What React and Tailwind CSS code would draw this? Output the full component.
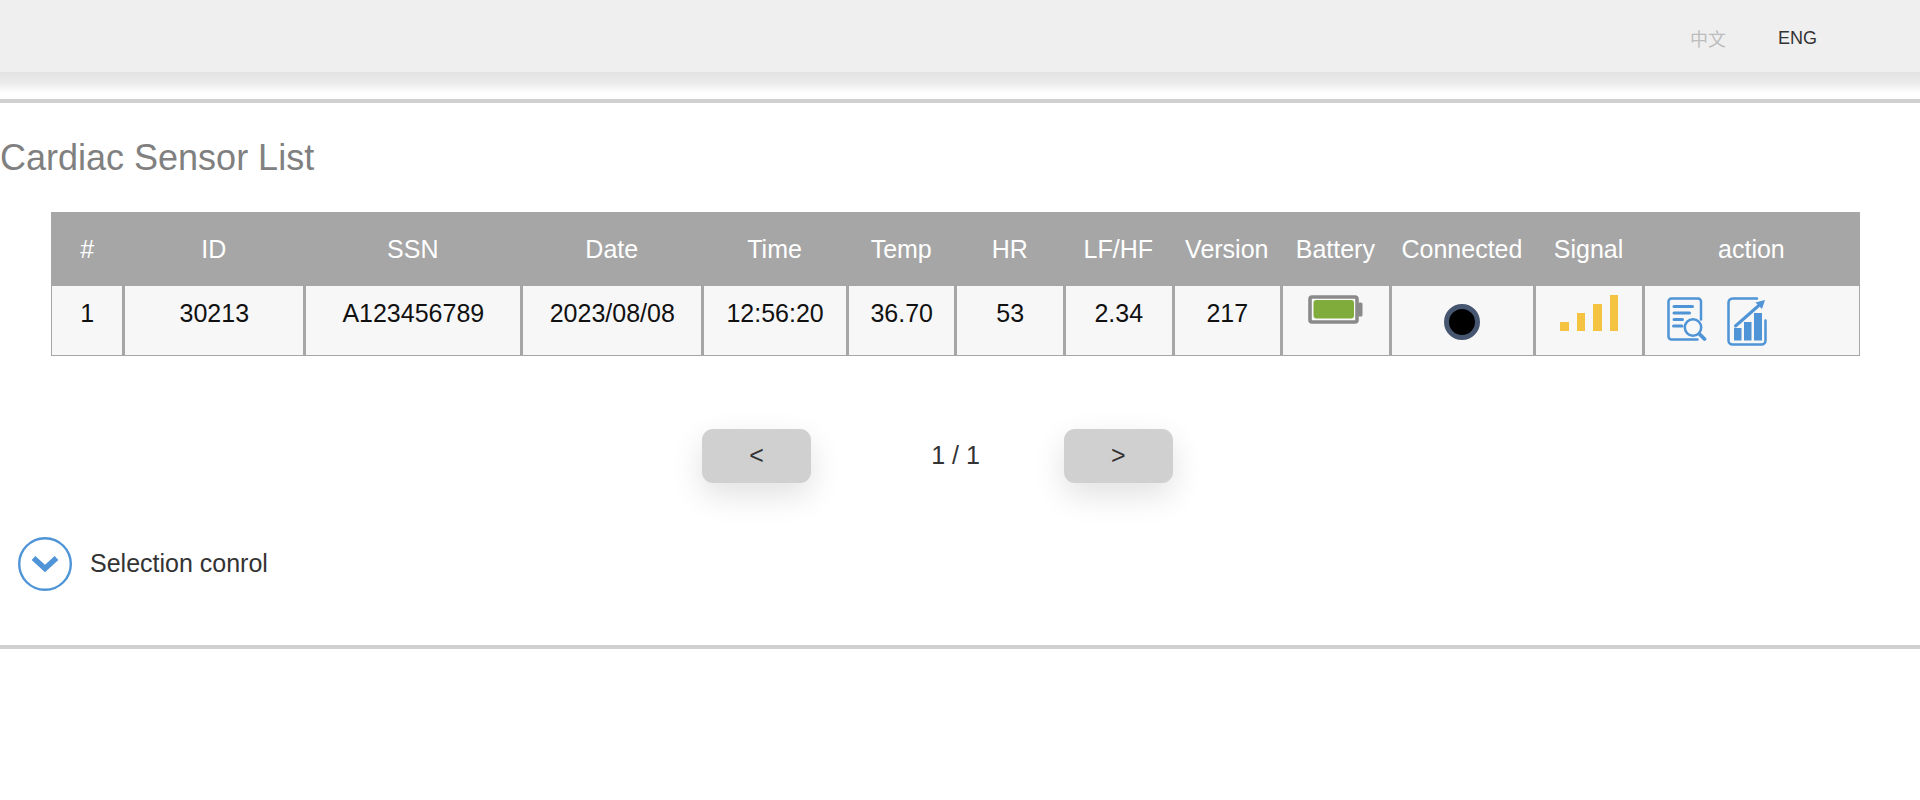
import React from 'react';

const columns = [
  { label: '#', width: 'w-[4%]' },
  { label: 'ID', width: 'w-[10%]' },
  { label: 'SSN', width: 'w-[12%]' },
  { label: 'Date', width: 'w-[10%]' },
  { label: 'Time', width: 'w-[8%]' },
  { label: 'Temp', width: 'w-[6%]' },
  { label: 'HR', width: 'w-[6%]' },
  { label: 'LF/HF', width: 'w-[6%]' },
  { label: 'Version', width: 'w-[6%]' },
  { label: 'Battery', width: 'w-[6%]' },
  { label: 'Connected', width: 'w-[8%]' },
  { label: 'Signal', width: 'w-[6%]' },
  { label: 'action', width: 'w-[12%]' },
];

const sensors = [
  {
    id: '30213',
    ssn: 'A123456789',
    date: '2023/08/08',
    time: '12:56:20',
    temp: '36.70',
    hr: '53',
    lfhf: '2.34',
    version: '217',
  },
];

function BatteryIcon() {
  return (
    <svg className="mx-auto block" width="55" height="29" viewBox="0 0 55 29" role="img" aria-label="Battery full">
      <rect x="50" y="7.5" width="4.5" height="14" rx="1.5" fill="#8a8a8a" />
      <rect x="2" y="2" width="47" height="25" rx="2" fill="#fafafa" stroke="#8a8a8a" strokeWidth="3.6" />
      <rect x="5.5" y="5" width="40.5" height="18.5" rx="3" fill="#80ac3c" />
    </svg>
  );
}

function SignalIcon() {
  return (
    <svg className="mx-auto block" width="58" height="36" viewBox="0 0 58 36" fill="#f5c342" role="img" aria-label="Signal strong">
      <rect x="0" y="27" width="9" height="9" />
      <rect x="17" y="18" width="8" height="18" />
      <rect x="33" y="9" width="9" height="27" />
      <rect x="50" y="0" width="8" height="36" />
    </svg>
  );
}

function ReportIcon() {
  return (
    <svg width="40" height="50" viewBox="0 0 40 50" fill="none" stroke="#4f94d6" strokeWidth="2.5" strokeLinecap="round">
      <path d="M30.5 42.5H4.500a3 3 0 0 1-3-3V4.500a3 3 0 0 1 3-3h26.500a3 3 0 0 1 3 3v18" />
      <path d="M7 9.500h18.500M7 16h15.500M7 22.500h8.500M6.500 29h8.500" strokeWidth="3" />
      <circle cx="26" cy="30.500" r="8.200" />
      <path d="M32.500 37l5 5" strokeWidth="3.800" />
    </svg>
  );
}

function ChartIcon() {
  return (
    <svg width="40" height="50" viewBox="0 0 40 50" fill="none" stroke="#4f94d6" strokeWidth="2.5" strokeLinecap="round">
      <path d="M30 1.500H5.500a4 4 0 0 0-4 4V43.500a4 4 0 0 0 4 4h29a4 4 0 0 0 4-4V23.500" />
      <g fill="#4f94d6" stroke="none">
        <rect x="7" y="31" width="7.500" height="12.500" />
        <rect x="17" y="25" width="7.500" height="18.500" />
        <rect x="27" y="16" width="8" height="27.500" />
        <path d="M38 3L28.500 5.500l6.500 6.500z" />
      </g>
      <path d="M8.500 29L33.500 7" strokeWidth="3" />
    </svg>
  );
}

function SensorTable() {
  return (
    <table className="w-full table-fixed border-separate border-spacing-0 text-center text-[25px] leading-9">
      <thead>
        <tr className="h-[74px] bg-[#a6a6a6] text-white">
          {columns.map((col) => (
            <th key={col.label} scope="col" className={`p-0 font-normal ${col.width}`}>
              {col.label}
            </th>
          ))}
        </tr>
      </thead>
      <tbody className="text-[#111111] [&_td]:border-b [&_td]:border-l-2 [&_td]:border-r [&_td]:border-[#a6a6a6] [&_td]:px-0 [&_td]:py-[9px] [&_td]:align-top [&_td:first-child]:border-l">
        {sensors.map((sensor, index) => (
          <tr key={sensor.id} className="h-[70px] bg-[#f7f7f7]">
            <td>{index + 1}</td>
            <td>{sensor.id}</td>
            <td>{sensor.ssn}</td>
            <td>{sensor.date}</td>
            <td>{sensor.time}</td>
            <td>{sensor.temp}</td>
            <td>{sensor.hr}</td>
            <td>{sensor.lfhf}</td>
            <td>{sensor.version}</td>
            <td>
              <BatteryIcon />
            </td>
            <td>
              <div className="mx-auto mt-[9px] -mb-[9px] size-9 rounded-full border-[5px] border-[#475670] bg-black"></div>
            </td>
            <td>
              <SignalIcon />
            </td>
            <td>
              <div className="-mb-2 flex gap-5 px-[22px] pt-[2px]">
                <button type="button" aria-label="View report" className="cursor-pointer">
                  <ReportIcon />
                </button>
                <button type="button" aria-label="View chart" className="cursor-pointer">
                  <ChartIcon />
                </button>
              </div>
            </td>
          </tr>
        ))}
      </tbody>
    </table>
  );
}

function PageButton({ label, children }) {
  return (
    <button
      type="button"
      aria-label={label}
      className="h-[54px] cursor-pointer rounded-[11px] bg-[#d0d0d0] shadow-[0_12px_32px_rgba(0,0,0,0.12)]"
    >
      {children}
    </button>
  );
}

export default function App() {
  return (
    <div className="bg-white font-['Liberation_Sans',Arial,sans-serif] text-[25px] text-[#333333]">
      <header className="flex h-[72px] items-center justify-end gap-[52px] bg-[#efefef] pt-1 pr-[103px] text-lg">
        <button type="button" className="cursor-pointer font-['Noto_Sans_CJK_TC',sans-serif] text-[#bdbdbd]">
          中文
        </button>
        <button type="button" className="cursor-pointer">
          ENG
        </button>
      </header>
      {/* Soft edge under the header */}
      <div className="h-[27px] bg-linear-to-b from-[#e3e3e3] via-[#ebebeb] via-40% to-white to-80%"></div>

      <main className="border-y-4 border-[#d0d0d0] pt-[35px] pb-[54px]">
        <h1 className="text-4xl text-[#808080]">Cardiac Sensor List</h1>

        <div className="mt-[34px] mr-[60px] ml-[51px]">
          <SensorTable />

          {/* Pagination */}
          <div className="mt-[73px] grid grid-cols-[36%_6%_2%_12%_6%] items-center text-center">
            <span></span>
            <PageButton label="Previous page">&lt;</PageButton>
            <span></span>
            <span>1 / 1</span>
            <PageButton label="Next page">&gt;</PageButton>
          </div>
        </div>

        {/* Collapsed filter panel */}
        <button type="button" className="mt-[54px] ml-[18px] flex cursor-pointer items-center gap-[18px]">
          <svg width="54" height="54" viewBox="0 0 54 54" fill="none" stroke="#4f94d6">
            <circle cx="27" cy="27" r="25.800" strokeWidth="2.400" />
            <path d="M15.500 21l11.500 10.500L38.500 21" strokeWidth="5.500" />
          </svg>
          Selection conrol
        </button>
      </main>
    </div>
  );
}
